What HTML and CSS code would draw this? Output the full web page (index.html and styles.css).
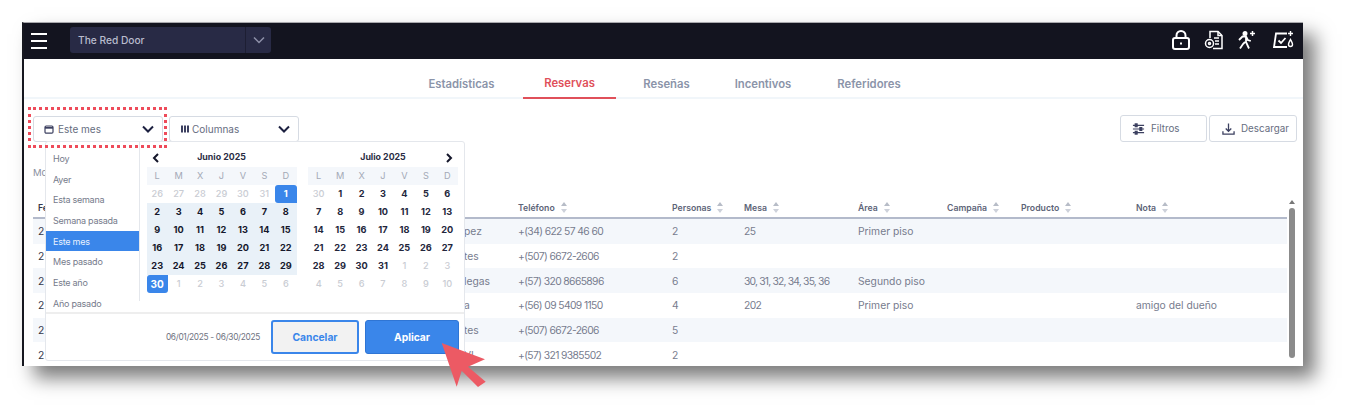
FILE: index.html
```html
<!DOCTYPE html>
<html lang="es">
<head>
<meta charset="utf-8">
<title>Reservas</title>
<link rel="stylesheet" href="styles.css">
</head>
<body>
<div class="stage">
  <div class="window">
    <header class="topbar">
      <div class="burger"><span></span><span></span><span></span></div>
      <div class="venue"><span class="venue-name">The Red Door</span><span class="venue-arrow"><svg width="12" height="8" viewBox="0 0 12 8"><path d="M1 1.500l5 5 5-5" fill="none" stroke="#8d90a8" stroke-width="1.500"/></svg></span></div>
      <div class="top-icons">
        <svg width="20" height="20" viewBox="0 0 20 20" fill="none" stroke="#fff" stroke-width="2"><rect x="2" y="8" width="16" height="11" rx="2"/><path d="M5.500 8V5.500a4.500 4.500 0 0 1 9 0V8"/><path d="M10 12.500v2"/></svg>
        <svg width="20" height="20" viewBox="0 0 20 20" fill="none" stroke="#fff" stroke-width="1.500"><path d="M6 8V1.500h8l4 4v13H9"/><path d="M14 1.500v4h4"/><path d="M10 8h5M11 11h4M11 14h4"/><circle cx="5.500" cy="13.500" r="4"/><circle cx="5.500" cy="13.500" r="1"/></svg>
        <svg class="walker" width="20" height="20" viewBox="0 0 20 20" fill="none" stroke="#fff" stroke-width="1.800"><circle cx="8" cy="3.600" r="1.600" fill="#fff"/><path d="M2 10l3.500-3.500h3.500L9 12l3 6.500M8 12l-2 2-3 4.500M9.300 7l1.500 3 3 1"/><path d="M15.500 1v5M13 3.500h5" stroke-width="1.500"/></svg>
        <svg width="22" height="20" viewBox="0 0 22 20" fill="none" stroke="#fff" stroke-width="1.800"><path d="M15 3.500H4L2 17h13"/><path d="M6.500 10.500l2.500 2.500 4.500-5"/><path d="M18.500 1v5M16 3.500h5" stroke-width="1.400"/><path d="M18.500 9.500c1 2 2 3.500 2 5a2 2 0 0 1-4 0c0-1.500 1-3 2-5z" stroke-width="1.400"/></svg>
      </div>
    </header>

    <nav class="tabs">
      <a class="tab tab-1">Estadísticas</a>
      <a class="tab tab-2 tab-active">Reservas</a>
      <a class="tab tab-3">Reseñas</a>
      <a class="tab tab-4">Incentivos</a>
      <a class="tab tab-5">Referidores</a>
    </nav>

    <div class="toolbar">
      <button class="select">
        <svg width="10" height="10" viewBox="0 0 10 10" fill="none" stroke="#3c4060" stroke-width="1.200"><rect x="1" y="2" width="8" height="7.200" rx="1.200"/><path d="M1 3.800h8" stroke-width="1.800"/></svg>
        <span class="select-label">Este mes</span>
        <svg class="chev" width="12" height="8" viewBox="0 0 12 8"><path d="M1 1.500l5 5 5-5" fill="none" stroke="#1c2040" stroke-width="2"/></svg>
      </button>
      <button class="select select-cols">
        <svg width="10" height="10" viewBox="0 0 10 10" fill="#3c4060"><rect x="1" y="1.500" width="2" height="7"/><rect x="4" y="1.500" width="2" height="7"/><rect x="7" y="1.500" width="2" height="7"/></svg>
        <span class="select-label">Columnas</span>
        <svg class="chev" width="12" height="8" viewBox="0 0 12 8"><path d="M1 1.500l5 5 5-5" fill="none" stroke="#1c2040" stroke-width="2"/></svg>
      </button>
      <div class="spacer"></div>
      <button class="action action-filter">
        <svg width="13" height="14" viewBox="0 0 14 14" stroke="#3c4060" stroke-width="1.300" fill="#3c4060"><path d="M1 3h12M1 7h12M1 11h12"/><rect x="3.500" y="1.500" width="2" height="3"/><rect x="8.500" y="5.500" width="2" height="3"/><rect x="3.500" y="9.500" width="2" height="3"/></svg>
        Filtros
      </button>
      <button class="action action-download">
        <svg width="13" height="14" viewBox="0 0 14 14" fill="none" stroke="#3c4060" stroke-width="1.400"><path d="M7 1v8M4 6.500L7 9.500l3-3"/><path d="M1 9.500v3h12v-3"/></svg>
        Descargar
      </button>
    </div>

    <div class="count">Mo</div>

    <div class="table">
      <div class="row head">
        <span class="cell">Fe</span>
        <span class="cell"></span>
        <span class="cell">Teléfono<i class="sort"></i></span>
        <span class="cell">Personas<i class="sort"></i></span>
        <span class="cell">Mesa<i class="sort"></i></span>
        <span class="cell">Área<i class="sort"></i></span>
        <span class="cell">Campaña<i class="sort"></i></span>
        <span class="cell">Producto<i class="sort"></i></span>
        <span class="cell">Nota<i class="sort"></i></span>
      </div>
      <div class="row"><span class="cell">2</span><span class="cell">pez</span><span class="cell num">+(34) 622 57 46 60</span><span class="cell">2</span><span class="cell num">25</span><span class="cell">Primer piso</span><span class="cell"></span><span class="cell"></span><span class="cell"></span></div>
      <div class="row"><span class="cell">2</span><span class="cell">tes</span><span class="cell num">+(507) 6672-2606</span><span class="cell">2</span><span class="cell"></span><span class="cell"></span><span class="cell"></span><span class="cell"></span><span class="cell"></span></div>
      <div class="row"><span class="cell">2</span><span class="cell">legas</span><span class="cell num">+(57) 320 8665896</span><span class="cell">6</span><span class="cell num-tight">30, 31, 32, 34, 35, 36</span><span class="cell">Segundo piso</span><span class="cell"></span><span class="cell"></span><span class="cell"></span></div>
      <div class="row"><span class="cell">2</span><span class="cell">a</span><span class="cell num">+(56) 09 5409 1150</span><span class="cell">4</span><span class="cell num">202</span><span class="cell">Primer piso</span><span class="cell"></span><span class="cell"></span><span class="cell">amigo del dueño</span></div>
      <div class="row"><span class="cell">2</span><span class="cell">tes</span><span class="cell num">+(507) 6672-2606</span><span class="cell">5</span><span class="cell"></span><span class="cell"></span><span class="cell"></span><span class="cell"></span><span class="cell"></span></div>
      <div class="row"><span class="cell">2</span><span class="cell">VI</span><span class="cell num">+(57) 321 9385502</span><span class="cell">2</span><span class="cell"></span><span class="cell"></span><span class="cell"></span><span class="cell"></span><span class="cell"></span></div>
      <div class="scrollbar"><i class="scroll-up"></i><i class="scroll-thumb"></i></div>
    </div>

    <div class="popover">
      <div class="pop-main">
        <ul class="ranges">
          <li>Hoy</li><li>Ayer</li><li>Esta semana</li><li>Semana pasada</li><li class="range-on">Este mes</li><li>Mes pasado</li><li>Este año</li><li>Año pasado</li>
        </ul>
        <div class="month">
          <div class="month-title"><svg class="nav" width="8" height="10" viewBox="0 0 8 10"><path d="M6 1L2 5l4 4" fill="none" stroke="#14162a" stroke-width="2"/></svg><span>Junio 2025</span></div>
          <div class="days">
            <b class="wd">L</b><b class="wd">M</b><b class="wd">X</b><b class="wd">J</b><b class="wd">V</b><b class="wd">S</b><b class="wd">D</b>
            <i class="off">26</i><i class="off">27</i><i class="off">28</i><i class="off">29</i><i class="off">30</i><i class="off">31</i><i class="start">1</i>
            <i class="in">2</i><i class="in">3</i><i class="in">4</i><i class="in">5</i><i class="in">6</i><i class="in">7</i><i class="in">8</i>
            <i class="in">9</i><i class="in">10</i><i class="in">11</i><i class="in">12</i><i class="in">13</i><i class="in">14</i><i class="in">15</i>
            <i class="in">16</i><i class="in">17</i><i class="in">18</i><i class="in">19</i><i class="in">20</i><i class="in">21</i><i class="in">22</i>
            <i class="in">23</i><i class="in">24</i><i class="in">25</i><i class="in">26</i><i class="in">27</i><i class="in">28</i><i class="in">29</i>
            <i class="end">30</i><i class="off">1</i><i class="off">2</i><i class="off">3</i><i class="off">4</i><i class="off">5</i><i class="off">6</i>
          </div>
        </div>
        <div class="month month-2">
          <div class="month-title"><span>Julio 2025</span><svg class="nav nav-next" width="8" height="10" viewBox="0 0 8 10"><path d="M2 1l4 4-4 4" fill="none" stroke="#14162a" stroke-width="2"/></svg></div>
          <div class="days">
            <b class="wd">L</b><b class="wd">M</b><b class="wd">X</b><b class="wd">J</b><b class="wd">V</b><b class="wd">S</b><b class="wd">D</b>
            <i class="off">30</i><i>1</i><i>2</i><i>3</i><i>4</i><i>5</i><i>6</i>
            <i>7</i><i>8</i><i>9</i><i>10</i><i>11</i><i>12</i><i>13</i>
            <i>14</i><i>15</i><i>16</i><i>17</i><i>18</i><i>19</i><i>20</i>
            <i>21</i><i>22</i><i>23</i><i>24</i><i>25</i><i>26</i><i>27</i>
            <i>28</i><i>29</i><i>30</i><i>31</i><i class="off">1</i><i class="off">2</i><i class="off">3</i>
            <i class="off">4</i><i class="off">5</i><i class="off">6</i><i class="off">7</i><i class="off">8</i><i class="off">9</i><i class="off">10</i>
          </div>
        </div>
      </div>
      <div class="pop-foot">
        <span class="range-text">06/01/2025 - 06/30/2025</span>
        <button class="btn btn-cancel">Cancelar</button>
        <button class="btn btn-apply">Aplicar</button>
      </div>
    </div>
  </div>
  <div class="highlight"></div>
  <svg class="cursor" width="50" height="50" viewBox="0 0 50 50"><path d="M1.700 1L45 17.300l-17 7.400L45.700 39.700 38 45 21.700 28.700 16.700 44.700z" fill="#ec5a64"/></svg>
</div>
</body>
</html>
```
FILE: styles.css
```css
* { box-sizing: border-box; }
html, body { margin: 0; padding: 0; background: #fff; }
body { width: 1345px; height: 409px; overflow: hidden; font-family: Inter, "Liberation Sans", sans-serif; }
.stage { position: relative; width: 1345px; height: 409px; padding: 22px 0 0 22px; }

.window {
  position: relative;
  width: 1281px;
  height: 344px;
  display: flex;
  flex-direction: column;
  background: #fff;
  overflow: hidden;
  border-left: 2px solid #16171f;
  border-top: 1px solid #a9a9ad;
  box-shadow: 12px 12px 18px rgba(0, 0, 0, .52);
}

/* top bar */
.topbar { height: 36px; flex: none; background: #13141f; display: flex; align-items: center; padding: 0 0 2px 7px; }
.burger { width: 16px; margin-top: 2px; display: flex; flex-direction: column; gap: 5px; }
.burger span { display: block; height: 2px; background: #fff; }
.venue { margin-left: 23px; width: 201px; height: 26px; background: #282a45; border-radius: 3px; display: flex; align-items: center; justify-content: space-between; }
.venue-name { padding-left: 8px; color: #b9bccd; font-size: 10.200px; font-weight: 500; }
.venue-arrow { width: 26px; height: 26px; border-left: 1px solid #1d1e33; display: flex; align-items: center; justify-content: center; }
.top-icons { margin-left: auto; padding-right: 9px; display: flex; align-items: center; gap: 13px; }
.walker { margin-right: 2px; }

/* tabs */
.tabs { position: relative; height: 40px; flex: none; border-bottom: 2px solid #f1f6fa; display: flex; font-size: 11.300px; font-weight: 600; color: #8b94a9; }
.tab { height: 40px; padding-top: 18px; line-height: 14px; text-align: center; }
.tab-1 { margin-left: 404px; width: 67px; }
.tab-2 { margin-left: 28px; width: 93px; color: #e0505a; border-bottom: 2px solid #e0505a; padding-top: 17px; }
.tab-3 { margin-left: 27px; width: 47px; }
.tab-4 { margin-left: 44px; width: 58px; }
.tab-5 { margin-left: 45px; width: 64px; }

/* toolbar */
.toolbar { height: 27px; margin-top: 16px; flex: none; display: flex; padding: 0 6px 0 9px; gap: 6px; align-items: flex-start; }
.select { width: 130px; height: 26px; margin-top: 1px; background: #fff; border: 1px solid #d6dbe3; border-radius: 3px; padding: 0 8px 0 10px; display: flex; align-items: center; gap: 4px; font: inherit; font-size: 10px; color: #666d80; }
.select-cols { gap: 2px; }
.select-label { flex: 1; text-align: left; }
.spacer { flex: 1; }
.action { height: 27px; background: #fff; border: 1px solid #d6dbe3; border-radius: 3px; padding-left: 11px; display: flex; align-items: center; gap: 6px; font: inherit; font-size: 9.800px; color: #666d80; }
.action-filter { width: 87px; }
.action-download { width: 88px; margin-left: -4px; padding-left: 12px; }

.count { height: 20px; margin-top: 21px; padding-left: 9px; flex: none; font-size: 9.500px; line-height: 20px; color: #8a8f9e; }

/* table */
.table { position: relative; flex: none; margin: 15px 0 0 9px; width: 1254px; }
.row { display: grid; grid-template-columns: 431px 54px 154px 72px 114px 89px 74px 115px 151px; height: 24.700px; align-items: center; font-size: 10.300px; color: #777c8e; }
.row:nth-child(even) { background: #f4f7fb; }
.row .cell:first-child { padding-left: 5px; color: #34384a; }
.head { height: 21px; border-bottom: 2px solid #b3bacb; font-size: 8.700px; font-weight: 600; color: #5d6478; }
.cell { display: flex; align-items: center; white-space: nowrap; }
.num { letter-spacing: -.6px; }
.num-tight { letter-spacing: -.8px; }
.sort { margin-left: 6px; width: 7px; height: 11px; position: relative; }
.sort::before, .sort::after { content: ""; position: absolute; left: 0; border-left: 3.500px solid transparent; border-right: 3.500px solid transparent; }
.sort::before { top: 0; border-bottom: 4px solid #b7bcc7; }
.sort::after { bottom: 0; border-top: 4px solid #cdd1da; }
.scrollbar { position: absolute; left: 1255px; top: 0; width: 8px; height: 148px; }
.scroll-up { position: absolute; left: 1px; top: 2px; border-left: 3px solid transparent; border-right: 3px solid transparent; border-bottom: 4px solid #777; }
.scroll-thumb { position: absolute; left: 1px; top: 10px; width: 6px; height: 150px; border-radius: 3px; background: #8b8b8b; }

/* date popover */
.popover { position: absolute; left: 21px; top: 118px; width: 420px; height: 220px; background: #fff; border: 1px solid #e4e7ec; border-radius: 3px; display: flex; flex-direction: column; }
.pop-main { flex: 1; display: flex; align-items: flex-start; border-bottom: 2px solid #eeeeee; }
.ranges { list-style: none; margin: 0; padding: 6px 0 0; width: 94px; height: 159px; flex: none; border-right: 1px solid #e4e7ec; font-size: 9px; letter-spacing: -.25px; color: #767b8b; }
.ranges li { height: 20.700px; line-height: 19.700px; padding: 1px 0 0 7px; white-space: nowrap; }
.ranges .range-on { background: #3a86ea; color: #e8f1fd; }
.month { width: 150px; margin-left: 6.500px; }
.month-2 { margin-left: 11.500px; }
.month-title { position: relative; height: 25px; padding-top: 8px; text-align: center; font-size: 8.800px; font-weight: 700; line-height: 14px; color: #2a2d45; }
.nav { position: absolute; left: 5px; top: 11px; }
.nav-next { left: auto; right: 5px; }
.days { display: grid; grid-template-columns: repeat(7, 1fr); grid-auto-rows: 18px; font-size: 9.200px; font-weight: 700; color: #23263c; text-align: center; line-height: 18px; }
.days i { font-style: normal; }
.days .wd { background: #f4f7fb; color: #a3a9b6; font-weight: 400; }
.days .off { color: #c9ccd3; font-weight: 500; }
.days .in { background: #e9f1f8; color: #15172b; }
.days .start { background: #3a86ea; color: #fff; border-radius: 3px 3px 0 3px; }
.days .end { background: #3a86ea; color: #fff; border-radius: 3px 0 3px 3px; font-size: 10px; }

.pop-foot { height: 46px; flex: none; display: flex; align-items: center; justify-content: flex-end; padding-right: 5px; }
.range-text { font-size: 8.300px; letter-spacing: -.3px; color: #6e7280; margin-right: 11px; }
.btn { height: 34px; border-radius: 3px; font: inherit; font-size: 10.300px; font-weight: 700; }
.btn-cancel { width: 88px; background: #f2f2f2; border: 2px solid #3a86ea; color: #3a86ea; }
.btn-apply { width: 94px; margin-left: 6px; background: #3a86ea; border: 1px solid #2f75d4; color: #fff; }

/* overlays on the photographed page */
.highlight { position: absolute; left: 28px; top: 107px; width: 139px; height: 41px; border: 3px dotted #ee4b5a; }
.cursor { position: absolute; left: 440px; top: 342px; }
```
